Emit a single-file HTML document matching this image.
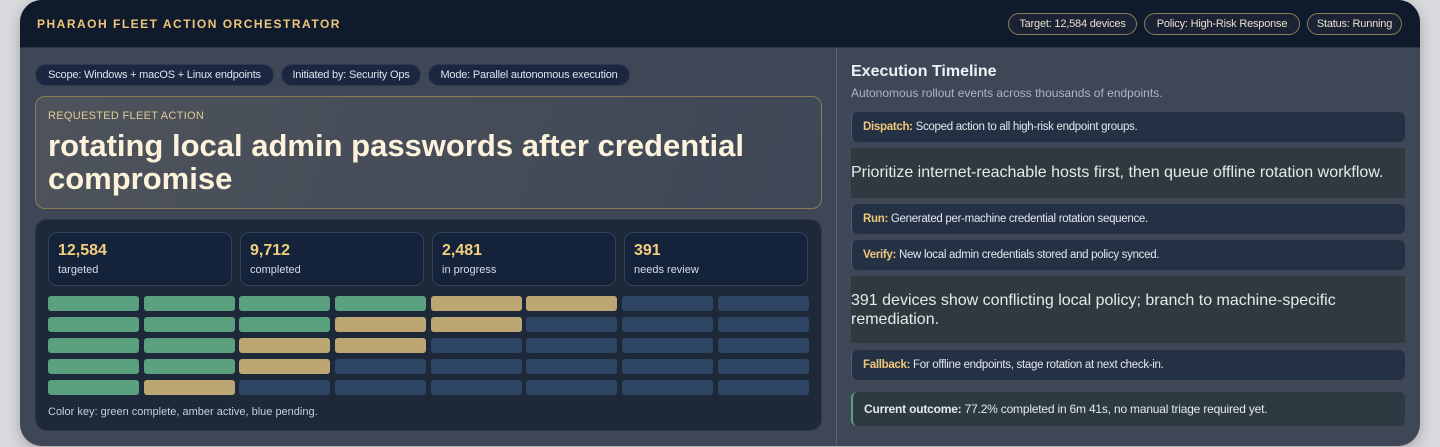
<!DOCTYPE html>
<html><head><style>
*{box-sizing:border-box;margin:0;padding:0}
body{width:1440px;height:447px;background:#d9dadd;font-family:"Liberation Sans",sans-serif;position:relative;overflow:hidden}
.win{position:absolute;left:20px;top:0;width:1400px;height:446px;background:#3f4756;border-radius:22px;overflow:hidden;box-shadow:0 4px 14px rgba(0,0,0,.25)}
.hdr{position:absolute;left:0;top:0;width:1400px;height:48px;background:#0f1a2d;border-bottom:1px solid #2b3548}
.ttl{position:absolute;left:17px;top:17px;font-size:12px;font-weight:bold;letter-spacing:1.5px;color:#efc77a}
.pill{position:absolute;top:13px;height:22px;border:1px solid #8d7c56;border-radius:11px;color:#e8e1cf;font-size:11px;line-height:20px;text-align:center;background:#1a2233;letter-spacing:-.2px}
.chip{position:absolute;top:64px;height:22px;border:1px solid #2c3a52;border-radius:11px;background:#1b2740;color:#dde3ec;font-size:11px;line-height:20px;text-align:center;letter-spacing:-.2px}
.act{position:absolute;left:15px;top:96px;width:787px;height:113px;border:1px solid #8a7a55;border-radius:10px;background:linear-gradient(110deg,#4e535b,#3e4756)}
.act .l{position:absolute;left:12px;top:13px;font-size:11px;color:#e2c999;letter-spacing:.3px}
.act .h{position:absolute;left:12px;top:32px;font-size:31px;font-weight:bold;color:#fdf3dc;line-height:33px;width:770px}
.stats{position:absolute;left:15px;top:219px;width:787px;height:212px;background:#1d2838;border-radius:12px;border:1px solid #2c3748}
.sc{position:absolute;top:12px;width:184px;height:54px;border:1px solid #34435a;border-radius:9px;background:#15233a}
.sc b{position:absolute;left:9px;top:9px;font-size:16px;color:#f1cf7e}
.sc span{position:absolute;left:9px;top:31px;font-size:11px;color:#d6dde6}
.c{position:absolute;width:91px;height:15px;border-radius:3px}
.g{background:#5aa07f}.a{background:#bca774}.b{background:#2e4563}
.key{position:absolute;left:12px;top:186px;font-size:11px;color:#c6cfdb}
.div{position:absolute;left:816px;top:48px;width:1px;height:400px;background:#5a6272}
.rt{position:absolute;left:831px;top:63px;font-size:16px;font-weight:bold;color:#eef1f6}
.rs{position:absolute;left:831px;top:86px;font-size:12px;color:#a9b5c8}
.it{position:absolute;left:831px;width:554px;height:30px;background:#243044;border-radius:6px;border-left:1px solid #4a5b78;font-size:11.5px;color:#e4e8ee;line-height:30px;padding-left:11px;letter-spacing:-.3px}
.it b{color:#efc77a}
.bl{position:absolute;left:831px;width:554px;background:#2e3a40;color:#e2ece6;font-size:16px;line-height:19px}
.out{position:absolute;left:831px;top:392px;width:554px;height:34px;background:#2e3a42;border-radius:6px;border-left:2px solid #5aa07f;font-size:12px;color:#e4ebe8;line-height:34px;padding-left:11px;letter-spacing:-.2px}
</style></head><body>
<div class="win">
<div class="hdr"><div class="ttl">PHARAOH FLEET ACTION ORCHESTRATOR</div>
<div class="pill" style="left:988px;width:129px">Target: 12,584 devices</div>
<div class="pill" style="left:1124px;width:156px">Policy: High-Risk Response</div>
<div class="pill" style="left:1287px;width:95px">Status: Running</div></div>
<div class="chip" style="left:15px;width:239px">Scope: Windows + macOS + Linux endpoints</div>
<div class="chip" style="left:261px;width:140px">Initiated by: Security Ops</div>
<div class="chip" style="left:408px;width:202px">Mode: Parallel autonomous execution</div>
<div class="act"><div class="l">REQUESTED FLEET ACTION</div><div class="h">rotating local admin passwords after credential compromise</div></div>
<div class="stats">
<div class="sc" style="left:12px"><b>12,584</b><span>targeted</span></div>
<div class="sc" style="left:204px"><b>9,712</b><span>completed</span></div>
<div class="sc" style="left:396px"><b>2,481</b><span>in progress</span></div>
<div class="sc" style="left:588px"><b>391</b><span>needs review</span></div>
<div id="grid"></div>
<div class="key">Color key: green complete, amber active, blue pending.</div>
</div>
<div class="div"></div>
<div class="rt">Execution Timeline</div>
<div class="rs">Autonomous rollout events across thousands of endpoints.</div>
<div class="it" style="top:112px"><b>Dispatch:</b> Scoped action to all high-risk endpoint groups.</div>
<div class="bl" style="top:148px;height:50px;padding-top:15px">Prioritize internet-reachable hosts first, then queue offline rotation workflow.</div>
<div class="it" style="top:204px"><b>Run:</b> Generated per-machine credential rotation sequence.</div>
<div class="it" style="top:240px"><b>Verify:</b> New local admin credentials stored and policy synced.</div>
<div class="bl" style="top:276px;height:67px;padding-top:15px">391 devices show conflicting local policy; branch to machine-specific<br>remediation.</div>
<div class="it" style="top:350px"><b>Fallback:</b> For offline endpoints, stage rotation at next check-in.</div>
<div class="out"><b>Current outcome:</b> 77.2% completed in 6m 41s, no manual triage required yet.</div>
</div>
<script>
var rows=["ggggaabb","gggaabbb","ggaabbbb","ggabbbbb","gabbbbbb"],xs=[12,108,203,299,395,490,586,682],h="";
rows.forEach(function(r,i){for(var j=0;j<8;j++)h+='<div class="c '+r[j]+'" style="left:'+xs[j]+'px;top:'+(76+i*21)+'px"></div>';});
document.getElementById("grid").innerHTML=h;
</script>
</body></html>
